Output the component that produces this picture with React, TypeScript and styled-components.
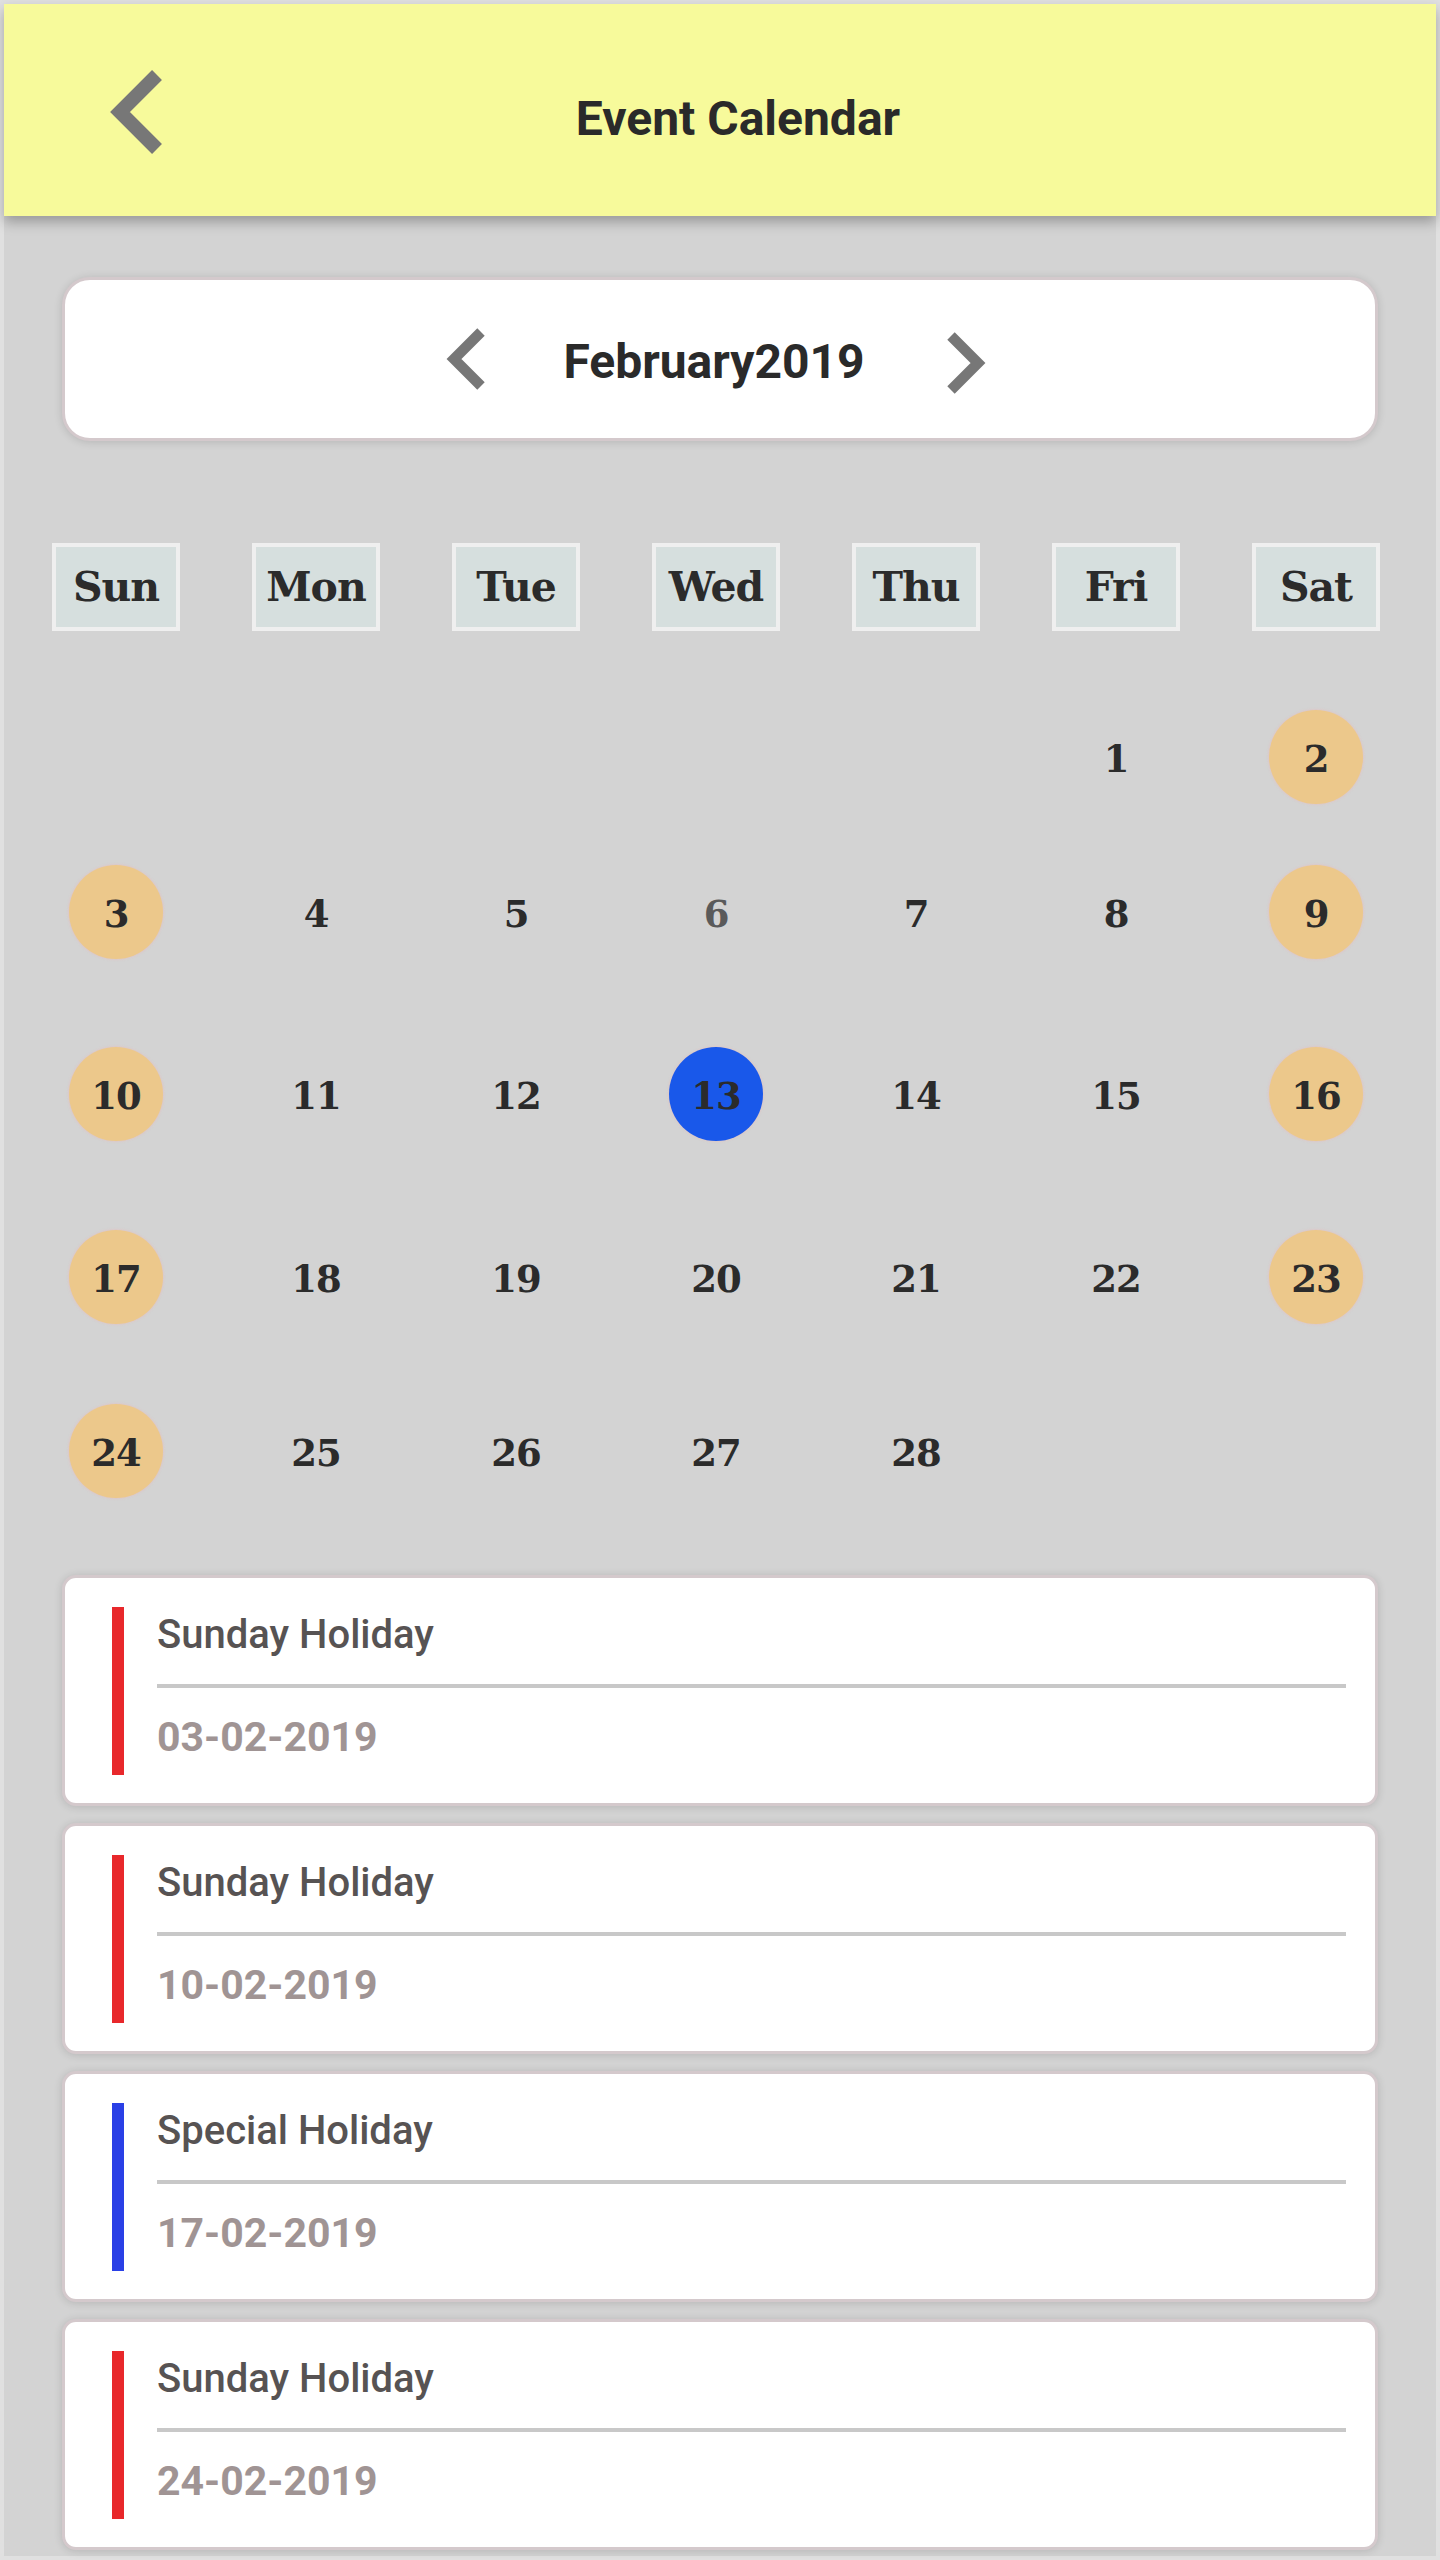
import React from "react";
import styled, { createGlobalStyle } from "styled-components";

const GlobalStyle = createGlobalStyle`
  html, body { margin: 0; padding: 0; background: #e0e0e0; }
  * { box-sizing: border-box; }
`;

const Page = styled.div`
  width: 1440px;
  min-height: 2560px;
  border: 4px solid #e0e0e0;
  background: #d3d3d3;
  font-family: Roboto, "Liberation Sans", sans-serif;
  display: flex;
  flex-direction: column;
`;

const Header = styled.header`
  position: relative;
  z-index: 1;
  height: 212px;
  background: #f7fa9b;
  box-shadow: 0 6px 12px rgba(0, 0, 0, 0.28);
  display: flex;
  align-items: center;
  padding: 0 132px 0 100px;
`;

const BackButton = styled.button`
  border: none;
  background: transparent;
  padding: 0;
  width: 68px;
  height: 96px;
  display: flex;
  align-items: center;
  justify-content: flex-start;
  cursor: pointer;
`;

const Title = styled.h1`
  flex: 1;
  margin: 0;
  padding-top: 16px;
  text-align: center;
  font-family: Roboto, "Liberation Sans", sans-serif;
  font-weight: 700;
  font-size: 48px;
  color: #2a2a2a;
`;

const MonthCard = styled.div`
  margin: 61px 58px 0 58px;
  height: 164px;
  background: #fff;
  border: 3px solid #d4c9cc;
  border-radius: 28px;
  box-shadow: 0 1px 8px rgba(0, 0, 0, 0.14);
  display: flex;
  align-items: center;
  justify-content: center;
  padding-right: 10px;
`;

const MonthNav = styled.button<{ $down?: boolean }>`
  border: none;
  background: transparent;
  padding: 0;
  width: 44px;
  height: 70px;
  display: flex;
  cursor: pointer;
  margin-top: ${(p) => (p.$down ? "8px" : "0")};
`;

const MonthLabel = styled.div`
  margin: 0 78px 0 76px;
  font-family: Roboto, "Liberation Sans", sans-serif;
  font-weight: 700;
  font-size: 48px;
  color: #2a2a2a;
  line-height: 1;
  padding-top: 6px;
`;

const WeekGrid = styled.div`
  margin: 102px 20px 0 12px;
  display: grid;
  grid-template-columns: repeat(7, 200px);
`;

const DayHead = styled.div`
  justify-self: center;
  width: 128px;
  height: 88px;
  border: 4px solid #efefef;
  background: #d6dfde;
  display: flex;
  align-items: center;
  justify-content: center;
  font-family: "DejaVu Serif", "Liberation Serif", serif;
  font-weight: 700;
  font-size: 41px;
  color: #2b2b2b;
  letter-spacing: -1px;
`;

const DateGrid = styled.div`
  margin: 48px 20px 0 12px;
  display: grid;
  grid-template-columns: repeat(7, 200px);
  grid-template-rows: 156px 154px 210px 156px 192px;
`;

const Cell = styled.div`
  display: flex;
  align-items: center;
  justify-content: center;
`;

type DayKind = "plain" | "weekend" | "today" | "muted";

const Day = styled.div<{ $kind: DayKind }>`
  width: 94px;
  height: 94px;
  border-radius: 50%;
  display: flex;
  align-items: center;
  justify-content: center;
  font-family: "DejaVu Serif", "Liberation Serif", serif;
  font-weight: 700;
  font-size: 37px;
  letter-spacing: -1px;
  padding-top: 3px;
  color: ${(p) => (p.$kind === "muted" ? "#5a5a5a" : "#2b2b2b")};
  background: ${(p) =>
    p.$kind === "weekend" ? "#ecc88b" : p.$kind === "today" ? "#1958ea" : "transparent"};
  box-shadow: ${(p) =>
    p.$kind === "weekend" || p.$kind === "today" ? "0 0 2px 1px rgba(225, 195, 195, 0.7)" : "none"};
`;

const EventList = styled.div`
  margin: 28px 58px 0 58px;
  display: flex;
  flex-direction: column;
  gap: 17px;
`;

const EventCard = styled.div`
  height: 231px;
  background: #fff;
  border: 3px solid #d4c9cc;
  border-radius: 14px;
  box-shadow: 0 1px 8px rgba(0, 0, 0, 0.14);
  display: flex;
  padding: 29px 29px 28px 47px;
`;

const Bar = styled.div<{ $color: string }>`
  width: 12px;
  flex: none;
  background: ${(p) => p.$color};
`;

const EventBody = styled.div`
  flex: 1;
  margin-left: 33px;
  padding-top: 4px;
  display: flex;
  flex-direction: column;
`;

const EventTitle = styled.div`
  font-family: Roboto, "Liberation Sans", sans-serif;
  font-weight: 500;
  font-size: 40px;
  line-height: 48px;
  color: #575353;
`;

const Divider = styled.div`
  height: 4px;
  background: #c8c8c8;
  margin: 25px 0 25px 0;
`;

const EventDate = styled.div`
  font-family: Roboto, "Liberation Sans", sans-serif;
  font-weight: 700;
  font-size: 41px;
  line-height: 48px;
  color: #a09494;
`;

const Chevron = ({ points, width, height, stroke }: { points: string; width: number; height: number; stroke: number }) => (
  <svg width={width} height={height} viewBox={`0 0 ${width} ${height}`}>
    <polyline
      points={points}
      fill="none"
      stroke="#777777"
      strokeWidth={stroke}
      strokeLinejoin="miter"
      strokeLinecap="butt"
    />
  </svg>
);

const days = ["Sun", "Mon", "Tue", "Wed", "Thu", "Fri", "Sat"];

const events = [
  { title: "Sunday Holiday", date: "03-02-2019", color: "#e8282b" },
  { title: "Sunday Holiday", date: "10-02-2019", color: "#e8282b" },
  { title: "Special Holiday", date: "17-02-2019", color: "#2a40e6" },
  { title: "Sunday Holiday", date: "24-02-2019", color: "#e8282b" },
];

export default function App() {
  const firstWeekday = 5; // Feb 1, 2019 is a Friday
  const cells: (number | null)[] = [];
  for (let i = 0; i < firstWeekday; i++) cells.push(null);
  for (let d = 1; d <= 28; d++) cells.push(d);
  while (cells.length < 35) cells.push(null);

  const kindOf = (d: number, idx: number): DayKind => {
    if (d === 13) return "today";
    if (d === 6) return "muted";
    const wd = idx % 7;
    if (wd === 0 || wd === 6) return "weekend";
    return "plain";
  };

  return (
    <>
      <GlobalStyle />
      <Page>
        <Header>
          <BackButton aria-label="Back">
            <Chevron width={68} height={96} stroke={14} points="53,13 16,50 53,87" />
          </BackButton>
          <Title>Event Calendar</Title>
        </Header>

        <MonthCard>
          <MonthNav aria-label="Previous month">
            <Chevron width={44} height={70} stroke={10.5} points="38,8 11,35 38,62" />
          </MonthNav>
          <MonthLabel>February2019</MonthLabel>
          <MonthNav aria-label="Next month" $down>
            <Chevron width={44} height={70} stroke={10.5} points="8,8 35,35 8,62" />
          </MonthNav>
        </MonthCard>

        <WeekGrid>
          {days.map((d) => (
            <DayHead key={d}>{d}</DayHead>
          ))}
        </WeekGrid>

        <DateGrid>
          {cells.map((d, i) => (
            <Cell key={i}>{d !== null && <Day $kind={kindOf(d, i)}>{d}</Day>}</Cell>
          ))}
        </DateGrid>

        <EventList>
          {events.map((e, i) => (
            <EventCard key={i}>
              <Bar $color={e.color} />
              <EventBody>
                <EventTitle>{e.title}</EventTitle>
                <Divider />
                <EventDate>{e.date}</EventDate>
              </EventBody>
            </EventCard>
          ))}
        </EventList>
      </Page>
    </>
  );
}
